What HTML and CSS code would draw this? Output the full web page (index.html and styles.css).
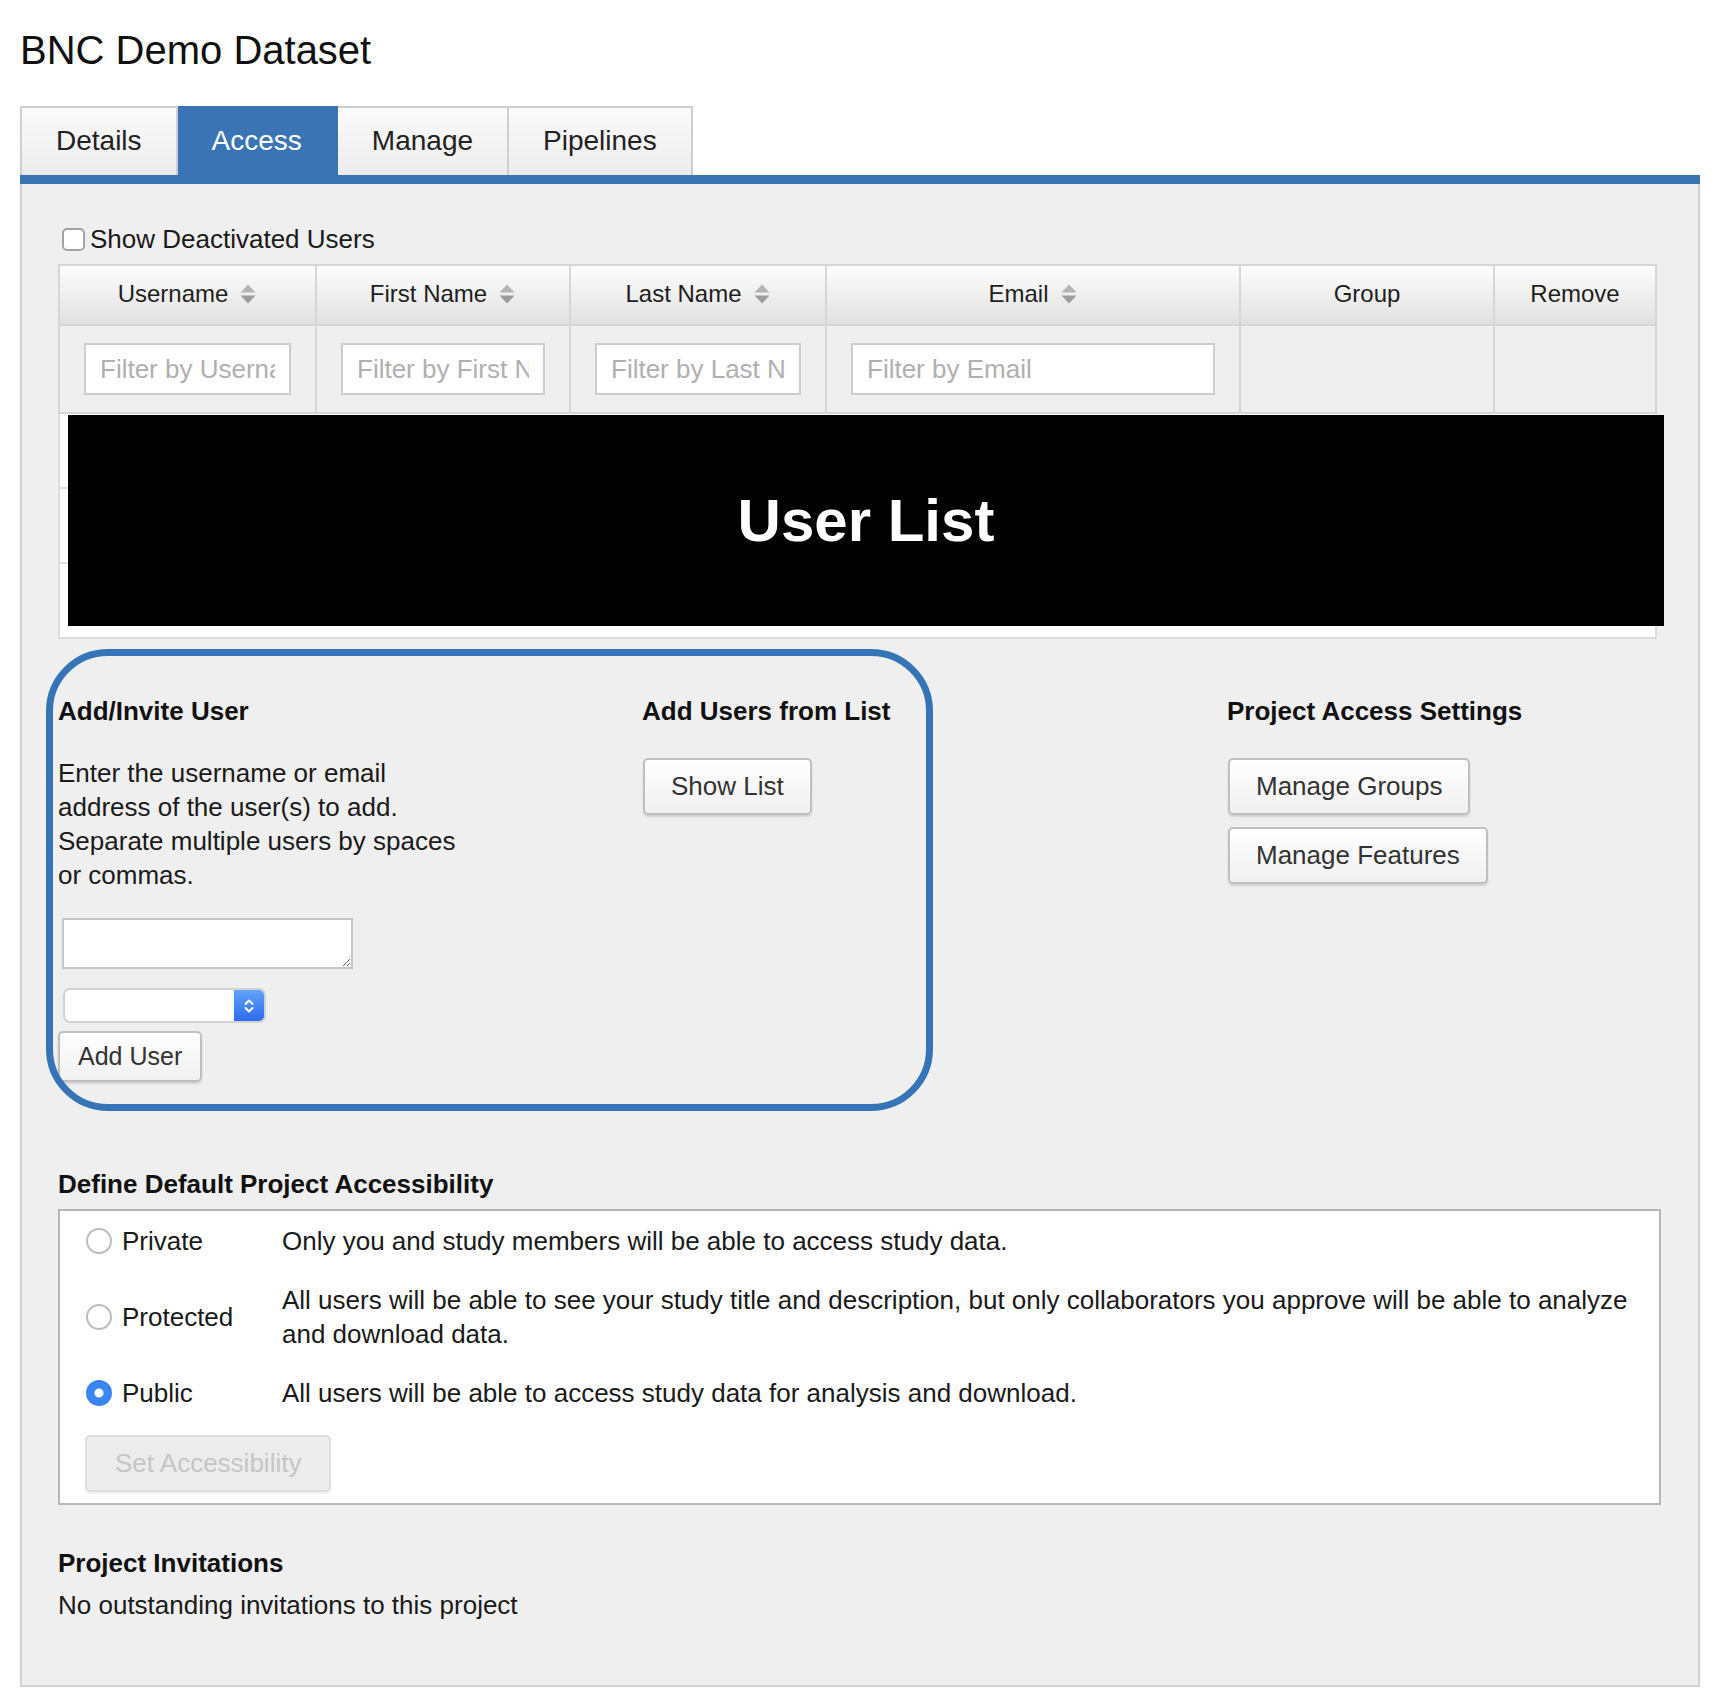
FILE: index.html
```html
<!DOCTYPE html>
<html lang="en">
<head>
<meta charset="utf-8">
<title>BNC Demo Dataset</title>
<link rel="stylesheet" href="styles.css">
</head>
<body>
<h1 class="title">BNC Demo Dataset</h1>
<div class="main">
  <div class="tabs">
    <div class="tab">Details</div>
    <div class="tab active">Access</div>
    <div class="tab">Manage</div>
    <div class="tab">Pipelines</div>
  </div>
  <div class="bar"></div>
  <div class="panel">
    <label class="check-row"><input type="checkbox" class="check"><span>Show Deactivated Users</span></label>

    <div class="table-wrap">
      <table class="users">
        <colgroup>
          <col class="c-user"><col class="c-first"><col class="c-last"><col class="c-email"><col class="c-group"><col class="c-remove">
        </colgroup>
        <thead>
          <tr class="head">
            <th><span class="th-in">Username <svg class="sort" width="18" height="22" viewBox="0 0 18 22"><path d="M1.5 9.5 L9 1.5 L16.5 9.5Z" fill="#b4b4b4"/><path d="M1.5 12.5 L9 20.5 L16.5 12.5Z" fill="#9c9c9c"/></svg></span></th>
            <th><span class="th-in">First Name <svg class="sort" width="18" height="22" viewBox="0 0 18 22"><path d="M1.5 9.5 L9 1.5 L16.5 9.5Z" fill="#b4b4b4"/><path d="M1.5 12.5 L9 20.5 L16.5 12.5Z" fill="#9c9c9c"/></svg></span></th>
            <th><span class="th-in">Last Name <svg class="sort" width="18" height="22" viewBox="0 0 18 22"><path d="M1.5 9.5 L9 1.5 L16.5 9.5Z" fill="#b4b4b4"/><path d="M1.5 12.5 L9 20.5 L16.5 12.5Z" fill="#9c9c9c"/></svg></span></th>
            <th><span class="th-in">Email <svg class="sort" width="18" height="22" viewBox="0 0 18 22"><path d="M1.5 9.5 L9 1.5 L16.5 9.5Z" fill="#b4b4b4"/><path d="M1.5 12.5 L9 20.5 L16.5 12.5Z" fill="#9c9c9c"/></svg></span></th>
            <th>Group</th>
            <th>Remove</th>
          </tr>
          <tr class="filters">
            <td><input class="filter" type="text" placeholder="Filter by Username"></td>
            <td><input class="filter" type="text" placeholder="Filter by First Name"></td>
            <td><input class="filter" type="text" placeholder="Filter by Last Name"></td>
            <td><input class="filter" type="text" placeholder="Filter by Email"></td>
            <td></td>
            <td></td>
          </tr>
        </thead>
        <tbody>
          <tr><td></td><td></td><td></td><td></td><td></td><td></td></tr>
          <tr><td></td><td></td><td></td><td></td><td></td><td></td></tr>
          <tr><td></td><td></td><td></td><td></td><td></td><td></td></tr>
        </tbody>
      </table>
      <div class="redact">User List</div>
    </div>

    <div class="cols">
      <div class="col">
        <h3 class="col-title">Add/Invite User</h3>
        <p class="desc">Enter the username or email address of the user(s) to add. Separate multiple users by spaces or commas.</p>
        <textarea class="invite"></textarea>
        <div class="select">
          <div class="select-fill"></div>
          <div class="select-arrow">
            <svg width="12" height="20" viewBox="0 0 12 20"><polyline points="2.5,8 6,4.5 9.5,8" fill="none" stroke="#fff" stroke-width="2" stroke-linecap="round" stroke-linejoin="round"/><polyline points="2.5,12 6,15.5 9.5,12" fill="none" stroke="#fff" stroke-width="2" stroke-linecap="round" stroke-linejoin="round"/></svg>
          </div>
        </div>
        <button class="btn small" type="button">Add User</button>
      </div>
      <div class="col">
        <h3 class="col-title">Add Users from List</h3>
        <div class="btn-stack">
          <button class="btn" type="button">Show List</button>
        </div>
      </div>
      <div class="col">
        <h3 class="col-title">Project Access Settings</h3>
        <div class="btn-stack">
          <button class="btn" type="button">Manage Groups</button>
          <button class="btn" type="button">Manage Features</button>
        </div>
      </div>
      <div class="annot"></div>
    </div>

    <h3 class="sec">Define Default Project Accessibility</h3>
    <div class="access-box">
      <div class="access-grid">
        <label class="opt"><input type="radio" name="acc" class="radio"><span>Private</span></label>
        <div class="opt-desc">Only you and study members will be able to access study data.</div>
        <label class="opt"><input type="radio" name="acc" class="radio"><span>Protected</span></label>
        <div class="opt-desc">All users will be able to see your study title and description, but only collaborators you approve will be able to analyze and download data.</div>
        <label class="opt"><input type="radio" name="acc" class="radio" checked><span>Public</span></label>
        <div class="opt-desc">All users will be able to access study data for analysis and download.</div>
      </div>
      <button class="btn disabled" type="button" disabled>Set Accessibility</button>
    </div>

    <h3 class="sec inv">Project Invitations</h3>
    <p class="note">No outstanding invitations to this project</p>
  </div>
</div>
</body>
</html>
```

FILE: styles.css
```css
html, body {
  margin: 0;
  padding: 0;
  background: #ffffff;
}

body {
  font-family: "Liberation Sans", Arial, Helvetica, sans-serif;
  color: #222;
}

.title {
  font-size: 40px;
  font-weight: normal;
  line-height: 48px;
  margin: 26px 0 32px 20px;
  color: #111;
}

.main {
  margin: 0 32px 0 20px;
}

/* Tabs */
.tabs {
  display: flex;
  height: 69px;
}

.tab {
  display: flex;
  align-items: center;
  padding: 0 34px 2px;
  font-size: 28px;
  color: #222;
  background: linear-gradient(#fbfbfb, #ececec);
  border-top: 2px solid #cfcfcf;
  border-right: 2px solid #cfcfcf;
}

.tab:first-child {
  border-left: 2px solid #cfcfcf;
}

.tab.active {
  background: #3b74b5;
  color: #fff;
  border-color: #3b74b5;
}

.bar {
  height: 9px;
  background: #3b74b5;
}

/* Panel */
.panel {
  background: #efefef;
  border: 2px solid #d2d2d2;
  border-top: none;
  padding: 40px 37px 63px 36px;
}

.check-row {
  display: flex;
  align-items: center;
  gap: 5px;
  height: 30px;
  margin-left: 4px;
  font-size: 26px;
  color: #1a1a1a;
}

.check {
  appearance: none;
  -webkit-appearance: none;
  width: 23px;
  height: 23px;
  margin: 0;
  box-sizing: border-box;
  border: 2px solid #a4a4a4;
  border-radius: 5px;
  background: #fff;
}

/* Users table */
.table-wrap {
  position: relative;
  margin-top: 10px;
  width: calc(100% - 4px);
}

.users {
  width: 100%;
  border-collapse: collapse;
  table-layout: fixed;
}

.c-user { width: 257px; }
.c-first { width: 254px; }
.c-last { width: 256px; }
.c-email { width: 414px; }
.c-group { width: 254px; }

.users th,
.users td {
  border: 2px solid #d6d6d6;
  padding: 0;
}

.head th {
  height: 56px;
  padding-bottom: 2px;
  background: linear-gradient(#fdfdfd, #e1e1e1);
  font-weight: normal;
  font-size: 24px;
  color: #1e1e1e;
  text-align: center;
}

.th-in {
  display: inline-flex;
  align-items: center;
  gap: 11px;
}

.filters td {
  height: 86px;
  background: #efefef;
  padding: 0 24px;
}

.filter {
  display: block;
  width: 100%;
  height: 52px;
  box-sizing: border-box;
  border: 2px solid #cdcdcd;
  background: #fff;
  font: 26px "Liberation Sans", Arial, sans-serif;
  padding: 0 14px;
  color: #222;
}

.filter::placeholder {
  color: #b0b0b0;
}

.users tbody td {
  height: 73px;
  background: #fff;
  border-left-width: 0;
  border-right-width: 0;
  border-color: #dcdcdc;
}

.users tbody td:first-child {
  border-left-width: 2px;
}

.users tbody td:last-child {
  border-right-width: 2px;
}

.redact {
  position: absolute;
  left: 10px;
  right: -7px;
  top: 151px;
  height: 211px;
  background: #000;
  color: #fff;
  font-size: 60px;
  font-weight: bold;
  display: flex;
  align-items: center;
  justify-content: center;
}

/* Three columns */
.cols {
  position: relative;
  display: grid;
  grid-template-columns: 584px 585px 1fr;
  margin-top: 55px;
}

.col-title {
  margin: 0;
  font-size: 26px;
  line-height: 34px;
  font-weight: bold;
  color: #111;
}

.desc {
  margin: 28px 0 26px;
  font-size: 26px;
  line-height: 34px;
  max-width: 415px;
  color: #1a1a1a;
}

.invite {
  display: block;
  width: 291px;
  height: 51px;
  box-sizing: border-box;
  margin: 0 0 19px 4px;
  border: 2px solid #c6c6c6;
  background: #fff;
  resize: both;
}

.select {
  display: flex;
  width: 203px;
  height: 35px;
  box-sizing: border-box;
  margin: 0 0 8px 5px;
  border: 2px solid #d2d2d2;
  border-radius: 7px;
  background: #fff;
  overflow: hidden;
}

.select-fill {
  flex: 1;
}

.select-arrow {
  width: 30px;
  display: flex;
  align-items: center;
  justify-content: center;
  background: linear-gradient(#62a3fa, #2c6bf0);
}

.btn {
  display: block;
  height: 57px;
  padding: 0 26px;
  font: 26px "Liberation Sans", Arial, sans-serif;
  color: #333;
  background: linear-gradient(#ffffff, #f0f0f0);
  border: 2px solid #bfbfbf;
  border-radius: 5px;
  box-shadow: 0 2px 2px rgba(0, 0, 0, 0.12);
}

.btn.small {
  height: 51px;
  padding: 0 18px;
  font-size: 25px;
}

.btn-stack {
  display: flex;
  flex-direction: column;
  align-items: flex-start;
  gap: 12px;
  margin-top: 30px;
  margin-left: 1px;
}

.annot {
  position: absolute;
  left: -12px;
  top: -45px;
  width: 887px;
  height: 462px;
  box-sizing: border-box;
  border: 7px solid #3574b6;
  border-radius: 62px;
  pointer-events: none;
}

/* Accessibility */
.sec {
  margin: 85px 0 8px;
  font-size: 26px;
  line-height: 34px;
  font-weight: bold;
  color: #111;
}

.access-box {
  background: #fff;
  border: 2px solid #b6b6b6;
  padding: 13px 20px 11px 25px;
}

.access-grid {
  display: grid;
  grid-template-columns: 197px 1fr;
  row-gap: 25px;
  align-items: center;
  font-size: 26px;
  line-height: 34px;
  color: #1a1a1a;
}

.opt {
  display: flex;
  align-items: center;
  gap: 10px;
  margin-left: 1px;
}

.radio {
  appearance: none;
  -webkit-appearance: none;
  width: 26px;
  height: 26px;
  margin: 0;
  box-sizing: border-box;
  border: 2px solid #bcbcbc;
  border-radius: 50%;
  background: #fff;
}

.radio:checked {
  border-color: #3a83f3;
  background: radial-gradient(circle, #fff 0 4px, #3a86f6 5px);
}

.btn.disabled {
  margin-top: 25px;
  padding: 0 28px;
  color: #c6c6c6;
  background: #ececec;
  border-color: #dedede;
  box-shadow: 0 2px 2px rgba(0, 0, 0, 0.06);
}

.sec.inv {
  margin-top: 41px;
}

.note {
  margin: 8px 0 0;
  font-size: 26px;
  line-height: 34px;
  color: #1a1a1a;
}
```
